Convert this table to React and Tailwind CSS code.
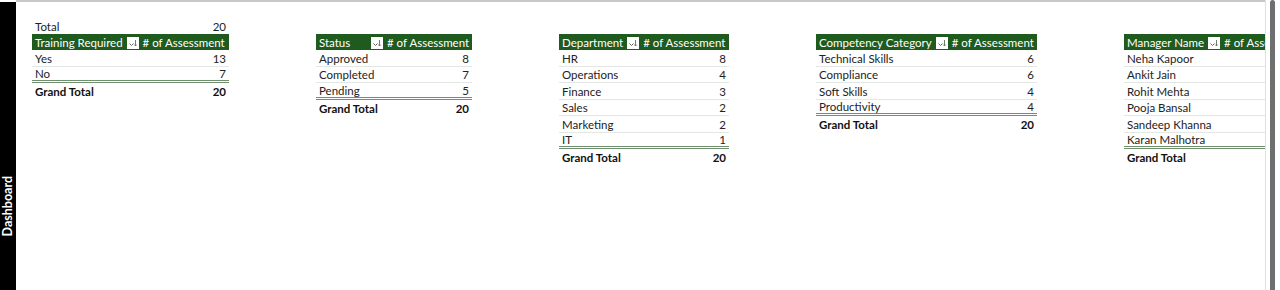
import React from "react";

const TABLES = [
  {
    label: "Training Required",
    total: true,
    width: "w-[197px]",
    rows: [["Yes", 13], ["No", 7]],
    grand: 20,
  },
  {
    label: "Status",
    width: "w-[156px]",
    labelWidth: "w-[48px]",
    rows: [["Approved", 8], ["Completed", 7], ["Pending", 5]],
    grand: 20,
  },
  {
    label: "Department",
    width: "w-[170px]",
    rows: [["HR", 8], ["Operations", 4], ["Finance", 3], ["Sales", 2], ["Marketing", 2], ["IT", 1]],
    grand: 20,
  },
  {
    label: "Competency Category",
    width: "w-[221px]",
    rows: [["Technical Skills", 6], ["Compliance", 6], ["Soft Skills", 4], ["Productivity", 4]],
    grand: 20,
  },
  {
    label: "Manager Name",
    width: "w-[160px]",
    rows: [["Neha Kapoor", ""], ["Ankit Jain", ""], ["Rohit Mehta", ""], ["Pooja Bansal", ""], ["Sandeep Khanna", ""], ["Karan Malhotra", ""]],
    grand: "",
  },
];

function FilterButton() {
  return (
    <span className="mx-[4px] flex h-[12px] w-[12px] shrink-0 items-center justify-center bg-white">
      <svg width="12" height="12" viewBox="0 0 12 12">
        <path d="M2.5 6.5 L4.5 8.5 L6.5 6.5" fill="none" stroke="#5f6f5f" strokeWidth="1" />
        <path d="M8.5 3 V9 M7.3 7.6 L8.5 9 L9.7 7.6" fill="none" stroke="#5f6f5f" strokeWidth="0.9" />
      </svg>
    </span>
  );
}

function Pivot({ table }) {
  return (
    <div className={`${table.width} shrink-0 ${table.total ? "" : "mt-[16px]"}`}>
      {table.total && (
        <div className="flex h-[16px] items-center justify-between px-[3px] pt-[1px] text-[#222]">
          <span>Total</span>
          <span>20</span>
        </div>
      )}
      <div className="flex h-[16px] items-center whitespace-nowrap bg-[#1f5a1f] pl-[3px] pt-[1px] text-white">
        <span className={table.labelWidth || ""}>{table.label}</span>
        <FilterButton />
        <span>
          # of&nbsp;Assessment
        </span>
      </div>
      {table.rows.map(([name, count], i) => (
        <div
          key={name}
          className={`flex h-[16.5px] items-center justify-between px-[3px] pt-[1px] text-[#222] ${
            i === table.rows.length - 1 ? "border-b-[3px] border-double border-[#6f8f6f]" : "border-b border-[#e4e8e4]"
          }`}
        >
          <span>{name}</span>
          <span>{count}</span>
        </div>
      ))}
      <div className="flex h-[16.5px] items-center justify-between px-[3px] pt-[1px] font-bold text-[#111]">
        <span>Grand Total</span>
        <span>{table.grand}</span>
      </div>
    </div>
  );
}

export default function App() {
  return (
    <div
      className="flex h-[290px] w-[1280px] overflow-hidden bg-white text-[11.5px] leading-none"
      style={{ fontFamily: "Lato, 'Liberation Sans', sans-serif" }}
    >
      <div className="mt-[2px] flex w-[16px] shrink-0 items-end justify-center bg-black pb-[54px]">
        <span className="rotate-180 whitespace-nowrap text-[12.5px] font-bold text-white [writing-mode:vertical-rl]">
          Dashboard
        </span>
      </div>
      <div className="relative flex w-[1249px] shrink-0 flex-col overflow-hidden border-t-2 border-[#c8c8c8]">
        <div className="absolute left-[300px] top-[-2px] h-[2px] w-[65px] bg-[#217346]" />
        <div className="mt-[16px] flex items-start gap-[87px] pl-[16px]">
          {TABLES.map((t) => (
            <Pivot key={t.label} table={t} />
          ))}
        </div>
      </div>
      <div className="flex flex-1 border-l border-[#e0e0e0] pl-[4px]">
        <div className="h-full w-[5px] rounded-t-[3px] bg-[#6f6f6f]" />
      </div>
    </div>
  );
}
